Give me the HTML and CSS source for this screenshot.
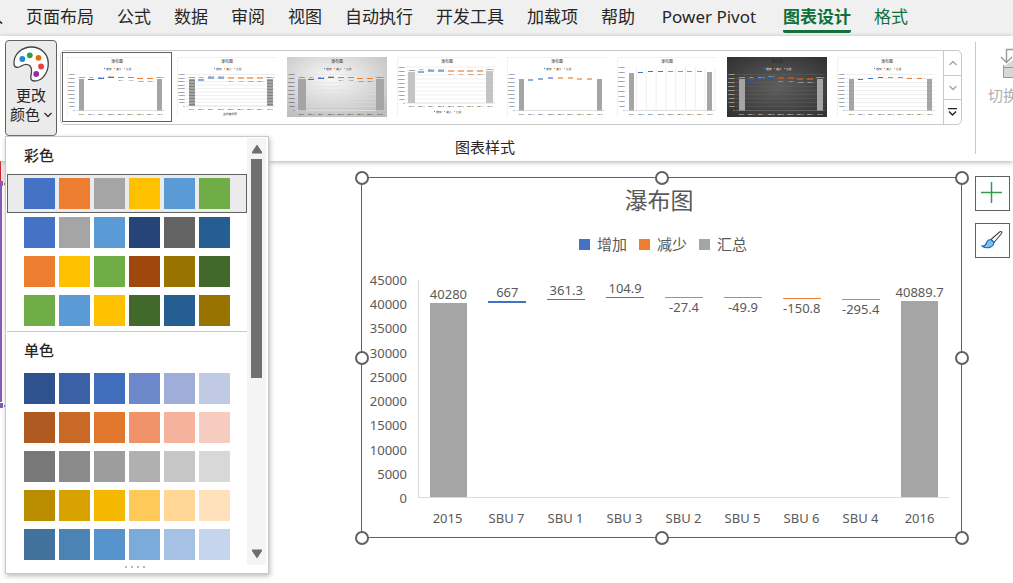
FILE: index.html
```
<!DOCTYPE html>
<html lang="zh-CN">
<head>
<meta charset="utf-8">
<title>图表设计</title>
<link rel="stylesheet" href="styles.css">
</head>
<body>
<nav class="tabs">
  <a class="tab tab-cut" href="#">插入</a>
  <a class="tab" href="#">页面布局</a>
  <a class="tab" href="#">公式</a>
  <a class="tab" href="#">数据</a>
  <a class="tab" href="#">审阅</a>
  <a class="tab" href="#">视图</a>
  <a class="tab" href="#">自动执行</a>
  <a class="tab" href="#">开发工具</a>
  <a class="tab" href="#">加载项</a>
  <a class="tab" href="#">帮助</a>
  <a class="tab tab-latin" href="#">Power Pivot</a>
  <a class="tab tab-active" href="#">图表设计</a>
  <a class="tab tab-context" href="#">格式</a>
</nav>

<section class="ribbon">
  <div class="group">
    <div class="group-body">
      <div class="color-menu">
        <button class="change-color" type="button" aria-expanded="true">
          <svg class="palette" width="38" height="37" viewBox="0 0 38 37">
            <path d="M2 18C1.500 8 10 1 19.500 1C29 1 36.300 8 36.300 17.500C36.300 27 30 35 22.500 35C18.500 35 18.500 32 19 29.500C19.800 26 20.500 22.500 18 20C15 17 12 18.500 9.500 20C6 22 2.200 22 2 18Z" fill="#fff" stroke="#444" stroke-width="1.300"/>
            <circle cx="10.300" cy="13" r="2.900" fill="#1e8bcd"/>
            <circle cx="17.800" cy="9.300" r="2.900" fill="#2f9e49"/>
            <circle cx="26.500" cy="11.800" r="2.900" fill="#e36c09"/>
            <circle cx="29.100" cy="20.500" r="2.900" fill="#ef3b3b"/>
            <circle cx="24.200" cy="28" r="2.900" fill="#9130a3"/>
          </svg>
          <span>更改</span>
          <span class="with-arrow">颜色 <svg width="8" height="6" viewBox="0 0 8 6"><path d="M0.500 1L4 4.500L7.500 1" fill="none" stroke="#333" stroke-width="1.400"/></svg></span>
        </button>
        <div class="menu">
          <div class="menu-main">
            <div class="menu-list">
              <h2 class="menu-title">彩色</h2>
              <div class="scheme-group" data-palette="colorful"></div>
              <hr class="menu-rule">
              <h2 class="menu-title">单色</h2>
              <div class="scheme-group" data-palette="mono"></div>
            </div>
            <div class="scrollbar">
              <svg width="12" height="10" viewBox="0 0 12 10"><path d="M6 0.500L11 8V9.500H1V8Z" fill="#6e6e6e"/></svg>
              <div class="scroll-track"><div class="scroll-thumb"></div></div>
              <svg width="12" height="10" viewBox="0 0 12 10"><path d="M6 9.500L11 2V0.500H1V2Z" fill="#6e6e6e"/></svg>
            </div>
          </div>
          <div class="grip"><i></i><i></i><i></i><i></i></div>
        </div>
      </div>
      <div class="gallery">
        <div class="gallery-items"></div>
        <div class="gallery-nav">
          <button type="button" aria-label="上一行"><svg width="8" height="6" viewBox="0 0 8 6"><path d="M0.500 5L4 1.500L7.500 5" fill="none" stroke="#a6a6a6" stroke-width="1.300"/></svg></button>
          <button type="button" aria-label="下一行"><svg width="8" height="6" viewBox="0 0 8 6"><path d="M0.500 1L4 4.500L7.500 1" fill="none" stroke="#a6a6a6" stroke-width="1.300"/></svg></button>
          <button type="button" aria-label="其他"><svg width="9" height="8" viewBox="0 0 9 8"><path d="M0 0.500H9M1 3.500L4.500 7L8 3.500" fill="none" stroke="#222" stroke-width="1.400"/></svg></button>
        </div>
      </div>
    </div>
    <div class="group-label">图表样式</div>
  </div>
  <div class="group-next">
    <button class="switch" type="button" disabled>
      <svg width="36" height="31" viewBox="0 0 36 31">
        <path d="M4 19L14 12H35V30H4Z" fill="#d8d8d8"/>
        <path d="M4.500 17V29.500H35M4.500 19.500H35M14.500 12V29.500" stroke="#999" fill="none"/>
        <path d="M14 1.500H7.500V14M2 9L7.500 14.500L13 9" stroke="#999" stroke-width="1.400" fill="none"/>
      </svg>
      <span>切换行/列</span>
    </button>
  </div>
</section>

<main class="sheet">
  <svg class="range" width="6" height="250" viewBox="0 0 6 250">
    <path d="M1 0H6V22H1Z" fill="#f6e3e4"/>
    <path d="M0 0H1V20H0Z" fill="#c0272d"/>
    <path d="M0 24H2V241H0Z" fill="#8458b8"/>
    <path d="M0 20H3V25H0ZM0 242H3V247H0Z" fill="#8458b8"/>
    <path d="M4 22H5V24H4Z" fill="#c0272d"/>
    <path d="M4 244H5V246H4Z" fill="#2f6eb5"/>
  </svg>
  <figure class="chart">
    <figcaption class="chart-title">瀑布图</figcaption>
    <div class="legend">
      <span class="key key-up">增加</span>
      <span class="key key-down">减少</span>
      <span class="key key-total">汇总</span>
    </div>
    <div class="plot-area">
      <div class="y-axis"></div>
      <div class="plot"></div>
      <div class="x-axis"></div>
    </div>
    <i class="handle h-nw"></i><i class="handle h-n"></i><i class="handle h-ne"></i>
    <i class="handle h-w"></i><i class="handle h-e"></i>
    <i class="handle h-sw"></i><i class="handle h-s"></i><i class="handle h-se"></i>
  </figure>
  <div class="chart-tools">
    <button type="button" aria-label="图表元素"><svg width="21" height="21" viewBox="0 0 21 21"><path d="M10.500 0V21M0 10.500H21" stroke="#2f9e49" stroke-width="1.500"/></svg></button>
    <button type="button" aria-label="图表样式"><svg width="22" height="18" viewBox="0 0 22 18">
      <path d="M10 8.500L18.500 1C20 0 21.500 1 20.500 2.500L13 11.500Z" fill="#fff" stroke="#444" stroke-width="1.100"/>
      <path d="M10 8.500C7 8.500 6 10 5.500 12C5 14 3 15 1 15C4 17.500 12 18 13 11.500Z" fill="#83beec" stroke="#1a6fb8" stroke-width="1.200"/>
    </svg></button>
  </div>
</main>
<script src="charts.js"></script>
</body>
</html>
```
FILE: styles.css
```
* { box-sizing: border-box; }
body {
  margin: 0;
  min-height: 100vh;
  display: flex;
  flex-direction: column;
  overflow: hidden;
  background: #fff;
  color: #262626;
  font: 15px/19px "Noto Sans", "Noto Sans CJK SC", sans-serif;
}
button { font: inherit; color: inherit; padding: 0; border: 0; background: none; }
svg { display: block; flex: none; }

.tabs {
  display: flex;
  gap: 23px;
  height: 36px;
  background: #f0f0f0;
  overflow: hidden;
}
.tab {
  flex: none;
  height: 33px;
  padding-top: 5px;
  font-size: 17px;
  line-height: 24px;
  color: #262626;
  text-decoration: none;
}
.tab-cut { width: 3px; direction: rtl; overflow: hidden; white-space: nowrap; }
.tab-latin { width: 102px; text-align: center; }
.tab-context { color: #0f703b; }
.tab-active { color: #0f703b; font-weight: bold; border-bottom: 3px solid #0f703b; border-radius: 0 0 2px 2px; }

.ribbon {
  position: relative;
  z-index: 1;
  display: flex;
  height: 125px;
  background: #fff;
  box-shadow: 0 1px 5px #aaa;
}
.group { flex: 1; min-width: 0; display: flex; flex-direction: column; padding: 4px 13px 0 5px; }
.group-body { display: flex; gap: 3px; height: 96px; }
.group-label { text-align: center; padding: 2px 0 0 3px; }
.color-menu { position: relative; flex: none; }
.change-color {
  display: flex;
  flex-direction: column;
  align-items: center;
  width: 52px;
  height: 96px;
  padding-top: 5px;
  border: 1px solid #616161;
  border-radius: 4px;
  background: #ebebeb;
}
.palette { margin-bottom: 3px; }
.with-arrow { display: flex; align-items: center; gap: 4px; }

.gallery {
  flex: 1;
  min-width: 0;
  display: flex;
  height: 75px;
  margin-top: 10px;
  border: 1px solid #c8c8c8;
  border-radius: 5px;
}
.gallery-items { flex: 1; min-width: 0; display: flex; overflow: hidden; padding: 1px; }
.style {
  flex: none;
  width: 110px;
  height: 70px;
  display: grid;
  place-items: center;
  border: 1px solid transparent;
}
.style-selected { border-color: #616161; }
.gallery-nav { display: flex; flex-direction: column; width: 18px; border-left: 1px solid #c8c8c8; }
.gallery-nav button { flex: 1; display: grid; place-items: center; }
.gallery-nav button + button { border-top: 1px solid #c8c8c8; }

.group-next { width: 38px; display: flex; align-items: flex-start; overflow: hidden; padding: 6px 0; }
.switch {
  flex: none;
  height: 112px;
  padding: 6px 0 0 12px;
  display: flex;
  flex-direction: column;
  gap: 7px;
  align-items: flex-start;
  border-left: 1px solid #c8c8c8;
  color: #b0b0b0;
}
.switch svg { margin-left: 11px; }

.menu {
  position: absolute;
  top: 96px;
  left: 0;
  width: 264px;
  padding: 1px;
  border: 1px solid #c8c8c8;
  background: #fff;
  box-shadow: 1px 2px 5px #bbb;
}
.menu-main { display: flex; height: 427px; overflow: hidden; }
.menu-list { flex: 1; }
.menu-title { margin: 0; padding: 8px 0 10px 17px; font-size: 15px; line-height: 18px; font-weight: 500; }
.menu-rule { margin: 1px 0; border: 0; border-top: 1px solid #c8c8c8; }
.scheme {
  display: flex;
  gap: 4px;
  width: 100%;
  height: 39px;
  padding: 3px 16px;
  border: 1px solid transparent;
}
.scheme-selected { border-color: #616161; background: #ebebeb; }
.swatch { width: 31px; height: 31px; }
.scrollbar {
  width: 21px;
  margin-right: 1px;
  display: flex;
  flex-direction: column;
  align-items: center;
  gap: 5px;
  padding: 6px 0;
  background: #f4f4f4;
}
.scroll-track { flex: 1; width: 11px; }
.scroll-thumb { height: 57%; background: #707070; }
.grip { display: flex; justify-content: center; gap: 4px; height: 7px; padding: 1px 5px 0 0; }
.grip i { width: 2px; height: 2px; background: #b4b8c0; }

.sheet {
  position: relative;
  flex: 1;
  display: flex;
  align-items: flex-start;
  gap: 13px;
  padding: 16px 3px 0 361px;
}
.range { position: absolute; left: 0; top: 0; }
.chart {
  position: relative;
  flex: 1;
  margin: 0;
  padding: 6px 12px 10px 7px;
  border: 1px solid #616161;
  color: #595959;
}
.chart-title { font-size: 23px; line-height: 32px; text-align: center; }
.legend { display: flex; justify-content: center; gap: 12px; padding: 19px 0 0 8px; }
.key { display: flex; align-items: center; gap: 7px; }
.key::before { content: ""; width: 11px; height: 11px; background: currentColor; }
.key-up::before { background: #4472c4; }
.key-down::before { background: #ed7d31; }
.key-total::before { background: #a5a5a5; }

.plot-area {
  display: grid;
  grid-template-columns: 38px 1fr;
  column-gap: 11px;
  margin-top: 17px;
  font-size: 13px;
  line-height: 18px;
}
.y-axis { display: flex; flex-direction: column; justify-content: space-between; height: 236px; text-align: right; }
.plot { display: flex; height: 218px; margin-top: 9px; border: solid #d9d9d9; border-width: 0 0 1px 1px; }
.x-axis { grid-column: 2; display: flex; padding-top: 2px; }
.x-axis span { flex: 1; text-align: center; white-space: nowrap; }
.column { flex: 1; min-width: 0; display: flex; flex-direction: column; align-items: center; justify-content: flex-end; white-space: nowrap; }
.column-below .value { margin-bottom: -18px; }
.bar { flex: none; width: 64%; min-height: 1px; }
.bar-up { background: #4472c4; }
.bar-down { background: #ed7d31; }
.bar-total { background: #a5a5a5; }
.base { flex: none; }

.handle {
  position: absolute;
  width: 14px;
  height: 14px;
  border: 2px solid #616161;
  border-radius: 50%;
  background: #fff;
}
.h-nw, .h-n, .h-ne { top: -7px; }
.h-sw, .h-s, .h-se { bottom: -8px; }
.h-nw, .h-w, .h-sw { left: -7px; }
.h-ne, .h-e, .h-se { right: -8px; }
.h-n, .h-s { left: calc(50% - 7px); }
.h-w, .h-e { top: calc(50% - 7px); }

.chart-tools { display: flex; flex-direction: column; gap: 12px; margin-top: -1px; }
.chart-tools button { width: 35px; height: 35px; display: grid; place-items: center; border: 1px solid #616161; background: #fff; }
.chart-tools svg { margin: 0 2px 2px 0; }
```
FILE: charts.js
```
const palettes = {
  colorful: [
    ["#4472c4", "#ed7d31", "#a5a5a5", "#ffc000", "#5b9bd5", "#70ad47"],
    ["#4472c4", "#a5a5a5", "#5b9bd5", "#264478", "#636363", "#255e91"],
    ["#ed7d31", "#ffc000", "#70ad47", "#9e480e", "#997300", "#43682b"],
    ["#70ad47", "#5b9bd5", "#ffc000", "#43682b", "#255e91", "#997300"]
  ],
  mono: [
    ["#2f528f", "#3a60a6", "#416dbd", "#6d88ca", "#a0add9", "#c0cae4"],
    ["#ae5a21", "#c86928", "#e2772e", "#f1936a", "#f5b39d", "#f7ccc0"],
    ["#787878", "#8b8b8b", "#9d9d9d", "#b0b0b0", "#c6c6c6", "#d8d8d8"],
    ["#ba8c00", "#d8a300", "#f4b800", "#ffc959", "#ffd696", "#ffe1bc"],
    ["#41719c", "#4c83b5", "#5794cd", "#7caadb", "#a5c1e4", "#c5d5eb"]
  ]
};
document.querySelectorAll("[data-palette]").forEach(box => {
  palettes[box.dataset.palette].forEach((row, i) => {
    const first = box.dataset.palette === "colorful" && i === 0;
    box.insertAdjacentHTML("beforeend",
      `<button type="button" class="scheme${first ? " scheme-selected" : ""}" aria-label="配色 ${i + 1}">` +
      row.map(c => `<span class="swatch" style="background:${c}"></span>`).join("") + "</button>");
  });
});

const data = [
  ["2015", 40280, 0, 40280, "total"],
  ["SBU 7", 667, 40280, 420, "up"],
  ["SBU 1", 361.3, 40947, 200, "up"],
  ["SBU 3", 104.9, 41200, 105, "up"],
  ["SBU 2", -27.4, 41281, 27, "down"],
  ["SBU 5", -49.9, 41232, 50, "down"],
  ["SBU 6", -150.8, 41081, 151, "down"],
  ["SBU 4", -295.4, 40900, 200, "down"],
  ["2016", 40889.7, 0, 40690, "total"]
];
const max = 45000;
const percent = v => (v / max * 100).toFixed(2) + "%";
for (let v = max; v >= 0; v -= 5000) {
  document.querySelector(".y-axis").insertAdjacentHTML("beforeend", `<span>${v}</span>`);
}
data.forEach(([name, value, base, size, kind]) => {
  const label = `<span class="value">${value}</span>`;
  const bar = `<span class="bar bar-${kind}" style="height:${percent(size)}"></span>`;
  const below = value < 0;
  document.querySelector(".plot").insertAdjacentHTML("beforeend",
    `<div class="column${below ? " column-below" : ""}">${below ? bar + label : label + bar}` +
    `<span class="base" style="height:${percent(base)}"></span></div>`);
  document.querySelector(".x-axis").insertAdjacentHTML("beforeend", `<span>${name}</span>`);
});

/* Gallery previews: one small chart per style, drawn on a 100 x 60 canvas. */
const styles = [
  { labels: 1 },
  { labels: 1, grid: 1, thick: 2, stripes: 1, bottom: 49, axisTitle: 1, soft: 1, wide: 6 },
  { labels: 1, grid: 1, bg: "url(#grey)", wide: 8 },
  { labels: 1, grid: 1, thick: 2, top: 10, bottom: 46, legendY: 56, wide: 7, soft: 1, light: 1 },
  { thick: 2, soft: 1 },
  { top: 10, noLegend: 1, vertical: 1 },
  { labels: 1, grid: 1, thick: 2, bg: "url(#dark)", dark: 1, wide: 6 },
  { grid: 1 }
];
function preview(s) {
  const top = s.top || 17.500, bottom = s.bottom || 53.500, h = bottom - top;
  const ink = s.dark ? "#f0f0f0" : "#333", line = s.dark ? "#606060" : "#dedede";
  const w = s.wide || 5, t = s.thick || 1;
  const up = s.soft ? "#8faadc" : s.dark ? "#34569a" : "#4472c4";
  const down = s.soft ? "#f4b183" : s.dark ? "#a85a28" : "#ed7d31";
  const small = `font-size="2.300" fill="${ink}"`;
  let out = `<rect width="100" height="60" fill="${s.bg || "#fff"}"/>`;
  if (!s.bg) out += `<path d="M0.500 60V0.500H100" fill="none" stroke="#f2f2f2"/>`;
  out += `<text x="50" y="6" font-size="4" text-anchor="middle" fill="${s.dark ? "#2a2a2a" : "#333"}">瀑布图</text>`;
  if (!s.noLegend) {
    const y = s.legendY || 12.500;
    [["增加", "#4472c4", 37], ["减少", "#ed7d31", 47], ["汇总", "#a5a5a5", 57]].forEach(([n, c, x]) => {
      out += `<rect x="${x}" y="${Math.round(y) - 2}" width="1" height="1" fill="${c}"/><text x="${x + 2}" y="${y}" font-size="2.800" fill="${ink}">${n}</text>`;
    });
  }
  for (let i = 0; i < 10; i++) {
    const y = top + h * i / 9;
    out += `<text x="7.500" y="${y + 0.900}" ${small} text-anchor="end">${max - i * 5000}</text>`;
    if (s.grid || i === 9) out += `<path d="M9 ${y}H98" stroke="${line}" stroke-width="${i === 9 ? 1 : 0.500}"/>`;
  }
  const marks = [];
  data.forEach(([name, value, base, size, kind], i) => {
    const x = 14.500 + i * 9.800;
    if (s.vertical) out += `<path d="M${x + 5} ${top}V${bottom}" stroke="${line}" stroke-width=".5"/>`;
    const y = Math.round(bottom - h * (base + size) / max);
    const left = Math.round(x - w / 2);
    if (kind === "total") {
      out += `<rect x="${left}" y="${y + 1}" width="${w}" height="${bottom - y - 1}" fill="${s.light ? "#c4c4c4" : "#a5a5a5"}"/>`;
      if (s.stripes) for (let k = y + 2.500; k < bottom; k += 3) out += `<path d="M${left} ${k}h${w}" stroke="#777" stroke-width=".8"/>`;
    } else {
      const width = s.labels ? 6 : 5;
      marks.push(`<rect x="${Math.round(x - 3)}" y="${i === 1 ? y + 1 : y}" width="${width}" height="${t}" fill="${kind === "up" ? up : down}"/>`);
    }
    if (s.labels) out += `<text x="${x}" y="${value < 0 ? y + t + 2.500 : y - 0.400}" ${small} text-anchor="middle">${value}</text>`;
    out += `<text x="${x}" y="${bottom + 4.200}" ${small} text-anchor="middle">${name}</text>`;
  });
  out += marks.join("");
  if (s.axisTitle) out += `<text x="53" y="57.500" font-size="2.800" text-anchor="middle" fill="#222">坐标轴标题</text>`;
  return out;
}
const defs = `<defs>
  <radialGradient id="grey" cx=".45" cy=".35" r=".75"><stop offset="0" stop-color="#fafafa"/><stop offset="1" stop-color="#bdbdbd"/></radialGradient>
  <radialGradient id="dark" cx=".5" cy=".5" r=".7"><stop offset="0" stop-color="#5e5e5e"/><stop offset="1" stop-color="#303030"/></radialGradient>
</defs>`;
styles.forEach((s, i) => {
  document.querySelector(".gallery-items").insertAdjacentHTML("beforeend",
    `<button type="button" class="style${i ? "" : " style-selected"}" aria-label="样式 ${i + 1}">` +
    `<svg width="100" height="60" viewBox="0 0 100 60">${i ? "" : defs}${preview(s)}</svg></button>`);
});
```
